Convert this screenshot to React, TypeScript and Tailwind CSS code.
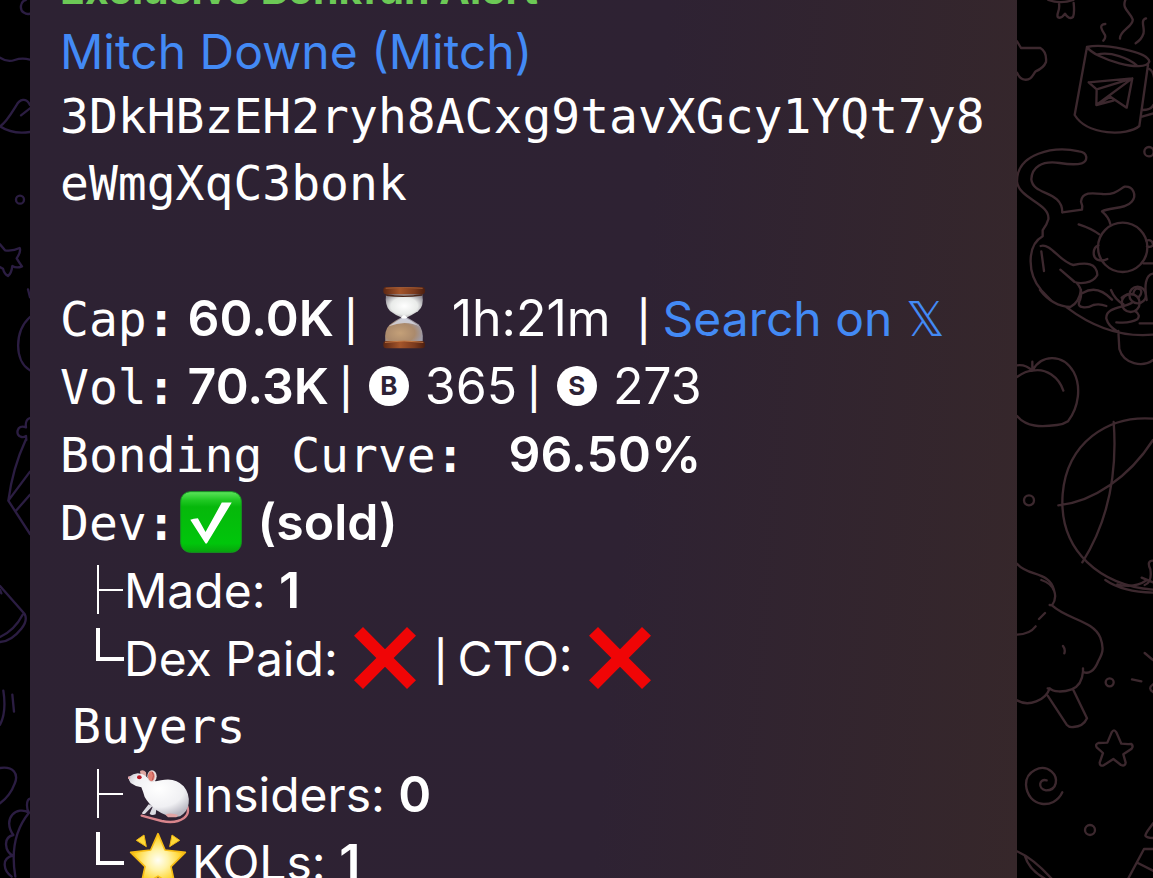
import type { ReactNode } from 'react';

const Row = ({ children }: { children: ReactNode }) => (
  <div className="flex h-[68px] items-baseline whitespace-pre leading-[69px]">{children}</div>
);

const Mono = ({ children }: { children: ReactNode }) => (
  <span className="font-['DejaVu_Sans_Mono',monospace] text-[48px]">{children}</span>
);

const Pipe = () => <span className="mx-2.5 text-[40px] font-medium">|</span>;

const Coin = ({ letter }: { letter: string }) => (
  <span className="ml-1.5 flex size-[40px] shrink-0 items-center justify-center self-center rounded-full bg-white text-[26px] font-bold leading-none text-[#2d2235]">
    {letter}
  </span>
);

const Branch = ({ last = false }: { last?: boolean }) => (
  <svg viewBox="0 0 30 68" className="ml-[34px] h-[68px] w-[30px] shrink-0 self-center" fill="none" stroke="#fff">
    {last ? <path d="M4 4V35H31" strokeWidth="4" /> : <path d="M4 9V58M4 34H29" strokeWidth="2" />}
  </svg>
);

const Hourglass = () => (
  <svg viewBox="103 48 186 186" className="ml-1.5 size-[62px] shrink-0 self-center">
    <defs>
      <linearGradient id="wood" x1="0" x2="1">
        <stop offset="0" stopColor="#5c2713" />
        <stop offset=".4" stopColor="#a4552a" />
        <stop offset=".75" stopColor="#7b3a1d" />
        <stop offset="1" stopColor="#4a1e10" />
      </linearGradient>
      <radialGradient id="bulb" cx=".5" cy=".5" r=".6">
        <stop offset="0" stopColor="#fff" />
        <stop offset=".6" stopColor="#e9ebe9" />
        <stop offset="1" stopColor="#8f8b94" />
      </radialGradient>
      <radialGradient id="sand" cx=".4" cy=".65" r=".6">
        <stop offset="0" stopColor="#c4a078" />
        <stop offset=".65" stopColor="#ab8a6c" />
        <stop offset="1" stopColor="#9e9aa6" />
      </radialGradient>
    </defs>
    <path d="M139 70H248Q254 107 235 121Q215 134 200 140H187Q166 132 151 120Q135 105 139 70Z" fill="url(#bulb)" />
    <path d="M187 138H200Q220 149 236 160Q252 175 249 212H137Q133 177 150 161Q166 149 187 138Z" fill="url(#sand)" />
    <path d="M193 138Q169 150 147 166Q172 157 195 156Q220 156 241 167Q218 150 193 138Z" fill="#d6dae6" opacity=".8" />
    <path d="M184 140Q193 145 203 140L196 133H190Z" fill="#fff" />
    <rect x="131" y="48" width="125" height="22" rx="9" fill="url(#wood)" />
    <path d="M138 69Q193 78 248 69V74Q193 81 140 75Z" fill="#4b2618" />
    <path d="M138 52Q193 47 249 52" stroke="#9b5936" strokeWidth="3" fill="none" />
    <rect x="131" y="210" width="125" height="22" rx="9" fill="url(#wood)" />
    <path d="M136 214Q193 206 251 214" stroke="#c57a45" strokeWidth="3" fill="none" />
  </svg>
);

const Check = () => (
  <svg viewBox="357 34 187 187" className="ml-1 size-[62px] shrink-0 self-center">
    <defs>
      <linearGradient id="green" x1="0" y1="0" x2="0" y2="1">
        <stop offset="0" stopColor="#5de45c" />
        <stop offset=".14" stopColor="#20c823" />
        <stop offset=".25" stopColor="#06b80b" />
        <stop offset=".85" stopColor="#00c60b" />
        <stop offset="1" stopColor="#08a30d" />
      </linearGradient>
    </defs>
    <rect x="359" y="36" width="183" height="183" rx="29" fill="url(#green)" stroke="#159820" strokeWidth="3" />
    <path d="M388 121Q398 116 411 116L434 158L483 69H513L438 192H434Z" fill="#fff" />
  </svg>
);

const Cross = () => (
  <svg viewBox="0 0 186 186" className="size-[62px] shrink-0 self-center">
    <path d="M27 0L93 67L159 0L186 26L119 93L186 160L159 186L93 119L27 186L0 160L67 93L0 26Z" fill="#f00506" />
  </svg>
);

const Mouse = () => (
  <svg viewBox="202 222 186 186" className="ml-1 mr-0.5 size-[62px] shrink-0 self-center">
    <defs>
      <radialGradient id="fur" cx=".5" cy=".35" r=".65">
        <stop offset="0" stopColor="#fff" />
        <stop offset=".65" stopColor="#f0f0f3" />
        <stop offset="1" stopColor="#b9b8c2" />
      </radialGradient>
    </defs>
    <path d="M380 352Q387 374 370 387Q345 405 303 396Q271 388 243 380" fill="none" stroke="#d9858c" strokeWidth="7" strokeLinecap="round" />
    <path d="M264 346L246 369Q240 377 253 374L276 351M277 351L267 374Q273 381 285 376L288 354" fill="#dcdce2" />
    <path d="M238 246Q248 240 256 250L257 267L240 258Z" fill="#dfa6a1" />
    <path d="M204 264Q222 250 239 254Q253 256 265 271Q281 280 301 274Q343 264 369 292Q387 314 384 343Q382 367 358 382Q336 387 317 379Q303 374 287 363Q263 344 252 324Q247 307 242 295Q225 293 210 282Q203 274 204 264Z" fill="url(#fur)" />
    <path d="M314 377Q329 369 353 378L347 385H322Z" fill="#e2a5a5" />
    <ellipse cx="274" cy="262" rx="14" ry="18" fill="#e8e1e3" />
    <ellipse cx="272" cy="262" rx="10" ry="15" fill="#e17e72" />
    <path d="M275 249Q282 259 275 274" fill="none" stroke="#b95351" strokeWidth="3" />
    <ellipse cx="236" cy="265" rx="7" ry="6" fill="#b91825" />
    <circle cx="205" cy="266" r="4" fill="#dfa4aa" />
  </svg>
);

const Star = () => (
  <svg viewBox="204 425 186 186" className="ml-1 mr-0.5 size-[62px] shrink-0 self-center">
    <defs>
      <radialGradient id="gold" cx=".5" cy=".5" r=".55">
        <stop offset="0" stopColor="#fffef5" />
        <stop offset=".35" stopColor="#fff3a8" />
        <stop offset=".75" stopColor="#ffd52f" />
        <stop offset="1" stopColor="#f5a900" />
      </radialGradient>
    </defs>
    <path
      d="M294 433L315 482L376 489L333 532L346 592L294 561L242 592L255 532L212 489L272 482Z"
      fill="url(#gold)"
      stroke="#f7bd15"
      strokeWidth="5"
      strokeLinejoin="round"
    />
    <path d="M229 453L252 437L259 472ZM359 453L336 437L329 472Z" fill="#ffd938" stroke="#eeb514" strokeWidth="3" strokeLinejoin="round" />
  </svg>
);

const LeftDoodles = () => (
  <svg viewBox="0 0 90 2634" className="h-[878px] w-[30px] shrink-0" fill="none" stroke="#2b1d42" strokeWidth="7" strokeLinecap="round" strokeLinejoin="round">
    <path d="M77 0C60 4 58 31 72 38Q80 44 90 41" />
    <path d="M0 173Q22 188 44 180Q66 172 90 179" />
    <path d="M90 315C78 291 59 298 49 316C36 337 19 367 0 379Q37 404 90 396M63 346L90 325" />
    <circle cx="60" cy="599" r="12" />
    <path d="M-25 752L0 733L15 751Q39 754 59 744Q64 754 50 775Q57 787 66 799Q50 806 37 798Q34 821 24 828Q13 822 9 806L-12 795" />
    <path d="M84 868L90 892M90 951C43 993 42 1083 90 1111" />
    <path d="M90 1254C76 1258 77 1276 78 1282C50 1270 44 1309 65 1311Q72 1312 78 1308L79 1320" />
    <g transform="translate(0 1320)">
      <path d="M77 0Q38 84 25 182L90 282M25 182L90 95M48 212L90 164" />
      <path d="M0 438L74 522Q84 541 64 566Q34 604 0 606M68 524Q44 570 0 591M0 450L4 460" />
      <path d="M10 752Q20 816 0 854M37 764L42 815" />
      <path d="M0 984C39 978 57 1001 44 1031Q31 1067 0 1090" />
      <path d="M90 1076C78 1079 79 1108 87 1118C51 1096 5 1135 40 1185C8 1192 14 1234 39 1247C2 1255 11 1293 35 1310M87 1118Q26 1192 46 1310" />
    </g>
  </svg>
);

const RightDoodles = () => (
  <svg viewBox="21 0 408 2634" className="h-[878px] w-[136px] shrink-0" fill="none" stroke="#3c282e" strokeWidth="7" strokeLinecap="round" strokeLinejoin="round">
    {/* mug */}
    <path d="M115 0Q151 13 190 0M147 11C151 31 139 39 143 51Q153 58 165 41Q176 60 189 51Q194 40 191 9" />
    <path d="M346 0C335 26 359 35 368 58C372 78 327 93 330 116M286 72C263 73 278 94 285 105Q288 114 280 122M408 55C388 60 408 89 399 104Q395 118 377 130" />
    <path d="M231 141C278 130 415 154 418 185C405 221 254 177 231 141L194 345C232 407 351 409 388 378L414 195M260 164C303 153 357 176 380 196M418 207Q429 213 432 232M398 330Q424 330 430 315M396 350L430 340" />
    <path d="M236 247L367 235L350 323L301 290L259 315L260 268L236 247M367 235L260 268M367 235L259 315L310 302" />
    {/* cloud and cat */}
    <path d="M21 124L33 144H91Q111 156 108 186Q101 204 77 214C67 226 64 241 44 239Q30 238 21 218" />
    <path d="M157 637C156 570 69 588 64 538C65 502 94 481 149 489Q194 496 215 490C235 482 234 457 207 454C131 437 20 460 21 545C27 597 121 610 115 658Q111 674 98 691V709C51 735 50 820 94 871L122 900" />
    <path d="M157 637L216 629Q219 618 213 605C216 574 249 579 278 582C318 585 328 567 344 560C369 558 382 585 365 605C346 628 300 621 276 634Q297 652 301 672M206 673Q244 685 268 703" />
    <circle cx="338" cy="742" r="74" />
    <path d="M102 813L94 754M92 738C123 729 147 784 190 795C229 787 260 788 262 825C247 853 207 851 194 846L151 809M201 850Q220 871 210 900M265 736C247 743 247 772 262 779Q278 785 292 777M409 722C421 717 428 724 429 735Q421 744 411 739M400 790H430M410 900C403 860 405 825 429 821M218 879Q262 852 306 899M335 893Q353 879 369 883Q374 859 391 868Q399 878 386 892" />
    <circle cx="417" cy="455" r="14" />
    <g transform="translate(0 870)">
      <path d="M90 0Q128 49 181 51Q208 37 213 0M170 52C244 108 330 143 429 134M208 35C199 55 230 56 250 45Q269 40 289 48M303 0Q315 30 340 42M289 86C286 51 340 54 366 38M289 86Q295 108 319 122M319 97Q361 101 382 88Q393 75 376 64M389 100H429M325 123L328 177C341 223 399 233 429 210" />
      <circle cx="362" cy="39" r="27" />
      <circle cx="383" cy="15" r="25" />
      <path d="M21 226Q46 222 67 242C93 195 156 188 191 246C214 289 207 351 174 394Q161 403 141 405C94 411 49 412 21 378M67 215V242Q48 242 21 261M67 242C108 233 147 262 160 302" />
      <path d="M429 386C292 376 171 459 158 612C145 787 276 886 429 899M311 396Q329 639 217 817M145 646C248 637 359 560 429 450M429 812Q409 812 421 838Q427 876 404 885M395 863L429 877" />
      <circle cx="57" cy="631" r="15" />
      <path d="M21 821C53 860 118 843 132 900" />
    </g>
    {/* tree, star, swirl */}
    <g transform="translate(0 1740)">
      <path d="M94 0C135 13 145 49 126 76C173 119 249 121 271 173C284 208 276 223 265 243C253 274 235 284 219 275C217 301 204 321 185 328C160 337 129 337 119 325C107 361 56 382 21 361M127 76L119 75M219 275V265M119 325H113M21 164Q59 163 77 139M87 117L105 99M159 198Q167 208 163 220M113 347L170 434Q178 443 190 441Q220 440 231 415L190 330" />
      <circle cx="299" cy="307" r="12" />
      <path d="M305 457Q312 445 319 457L334 491Q350 493 364 492Q371 498 365 506L340 523L347 548Q346 560 333 555L310 537L281 556Q269 559 269 548L279 519L260 502Q255 492 265 489L292 488L305 457" />
      <path d="M110 601C87 594 82 626 108 631C142 631 146 594 125 575C95 549 47 574 48 614C52 682 132 691 157 637" />
      <circle cx="240" cy="750" r="15" />
      <path d="M21 814Q69 835 124 895M44 826Q57 870 105 896M355 895L402 807H429M382 848L429 872M429 730C422 741 406 758 406 767Q410 774 429 774M404 219L429 240M366 298L394 304M429 313Q412 325 429 336M286 0Q338 36 429 38M322 13Q372 27 411 0" />
    </g>
  </svg>
);

export default function App() {
  return (
    <div className="flex h-screen overflow-hidden bg-black font-['Inter',sans-serif] text-[48px] text-white">
      <LeftDoodles />

      <main className="min-w-0 flex-1 bg-linear-[95deg] from-[#2d2233] from-0% via-[#2e2233] via-60% to-[#36272a] to-100% pl-[30px]">
        <h1 className="-mt-[49px] h-[66px] whitespace-nowrap text-[41px] font-bold leading-[76px] text-[#6cc956]">
          Exclusive Bonkfun Alert
        </h1>
        <a href="#mitch" className="block h-[66px] whitespace-nowrap leading-[69px] text-[#438af5]">
          Mitch Downe (Mitch)
        </a>
        <p className="mb-[67px] font-['DejaVu_Sans_Mono',monospace] leading-[67px]">
          3DkHBzEH2ryh8ACxg9tavXGcy1YQt7y8
          <br />
          eWmgXqC3bonk
        </p>

        <Row>
          <Mono>Cap<b>:</b></Mono>
          <b className="ml-3 text-[50px] font-semibold">60.0K</b>
          <Pipe />
          <Hourglass />
          <span className="ml-4 mr-4 text-[50px]">1h:21m</span>
          <Pipe />
          <a href="#search" className="ml-0.5 text-[#438af5]">
            Search on <span className="font-['DejaVu_Sans',sans-serif]">𝕏</span>
          </a>
        </Row>
        <Row>
          <Mono>Vol<b>:</b></Mono>
          <b className="ml-3 text-[50px] font-semibold">70.3K</b>
          <Pipe />
          <Coin letter="B" />
          <span className="ml-4 text-[50px]">365</span>
          <Pipe />
          <Coin letter="S" />
          <span className="ml-4 text-[50px]">273</span>
        </Row>
        <Row>
          <Mono>Bonding Curve<b>:</b></Mono>
          <b className="ml-11 text-[50px] font-semibold">96.50%</b>
        </Row>
        <Row>
          <Mono>Dev<b>:</b></Mono>
          <Check />
          <b className="ml-4 text-[50px] font-semibold">(sold)</b>
        </Row>
        <Row>
          <Branch />
          <span>Made: <b className="text-[50px] font-semibold">1</b></span>
        </Row>
        <Row>
          <Branch last />
          <span className="mr-4">Dex Paid:</span>
          <Cross />
          <span className="w-2" />
          <Pipe />
          <span className="mr-4">CTO:</span>
          <Cross />
        </Row>
        <Row>
          <span className="w-3" />
          <Mono>Buyers</Mono>
        </Row>
        <Row>
          <Branch />
          <Mouse />
          <span>Insiders: <b className="text-[50px] font-semibold">0</b></span>
        </Row>
        <Row>
          <Branch last />
          <Star />
          <span>KOLs: <b className="text-[50px] font-semibold">1</b></span>
        </Row>
      </main>

      <RightDoodles />
    </div>
  );
}
